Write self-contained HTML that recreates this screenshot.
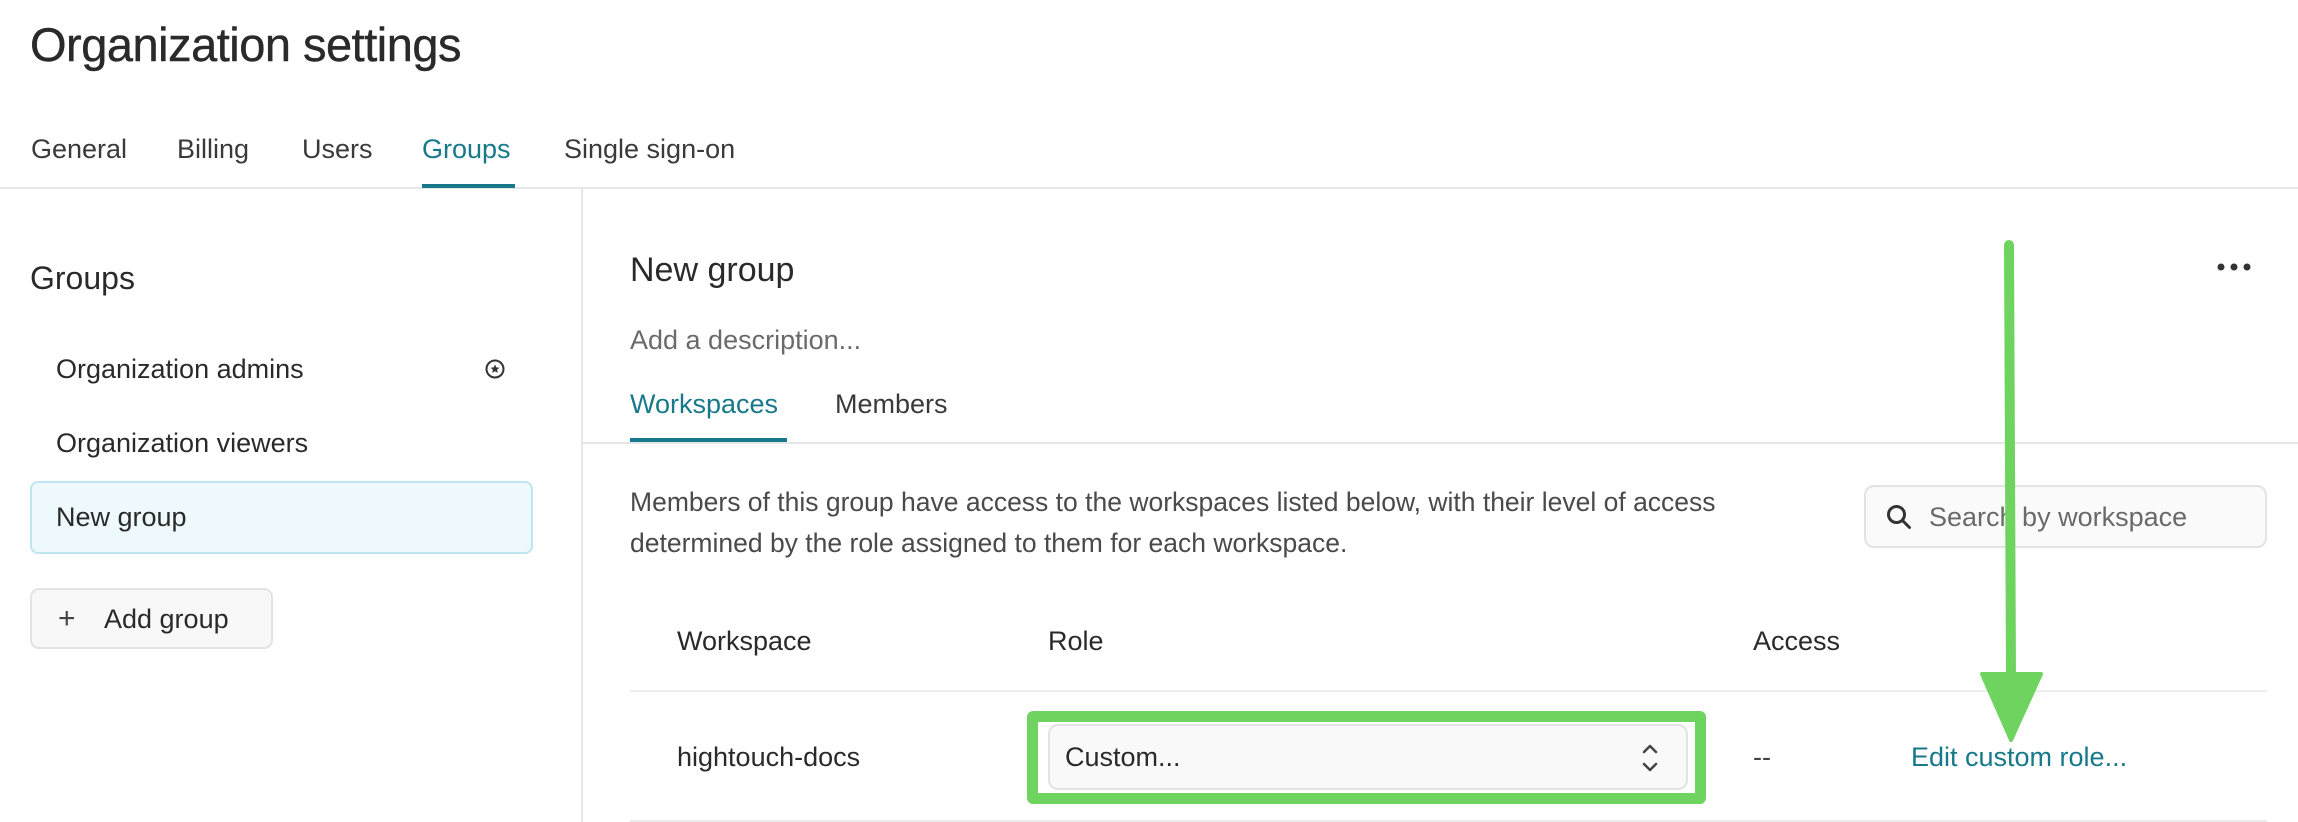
<!DOCTYPE html>
<html><head><meta charset="utf-8"><style>
*{margin:0;padding:0;box-sizing:border-box}
body{width:2298px;height:822px;overflow:hidden;background:#fff;font-family:"Liberation Sans",sans-serif;color:#2a2a2a;position:relative}
.a{position:absolute;white-space:nowrap}
</style></head><body>
<div class="a" style="left:30px;top:17px;font-size:47px;letter-spacing:-0.5px;-webkit-text-stroke:0.4px #2a2a2a">Organization settings</div>
<div class="a" style="left:31px;top:134px;font-size:27px;color:#3a3a3a">General</div>
<div class="a" style="left:177px;top:134px;font-size:27px;color:#3a3a3a">Billing</div>
<div class="a" style="left:302px;top:134px;font-size:27px;color:#3a3a3a">Users</div>
<div class="a" style="left:422px;top:134px;font-size:27px;color:#17798a">Groups</div>
<div class="a" style="left:564px;top:134px;font-size:27px;color:#3a3a3a">Single sign-on</div>
<div class="a" style="left:0;top:187px;width:2298px;height:2px;background:#e6e6e6"></div>
<div class="a" style="left:422px;top:184px;width:93px;height:4px;background:#17798a"></div>
<div class="a" style="left:581px;top:188px;width:2px;height:634px;background:#e6e6e6"></div>

<div class="a" style="left:30px;top:260px;font-size:32px">Groups</div>
<div class="a" style="left:56px;top:354px;font-size:27px">Organization admins</div>
<svg class="a" style="left:484px;top:358px" width="22" height="22" viewBox="0 0 22 22"><circle cx="11" cy="11" r="8.5" fill="none" stroke="#333" stroke-width="2"/><path d="M11 6.5l1.3 2.9 3.1.3-2.3 2.1.7 3.1-2.8-1.6-2.8 1.6.7-3.1-2.3-2.1 3.1-.3z" fill="#333"/></svg>
<div class="a" style="left:56px;top:428px;font-size:27px">Organization viewers</div>
<div class="a" style="left:30px;top:481px;width:503px;height:73px;background:#eef9fd;border:2px solid #bfe5f0;border-radius:8px"></div>
<div class="a" style="left:56px;top:502px;font-size:27px">New group</div>
<div class="a" style="left:30px;top:588px;width:243px;height:61px;background:#f8f8f8;border:2px solid #e3e3e3;border-radius:9px"></div>
<div class="a" style="left:58px;top:602px;font-size:30px;color:#444">+</div>
<div class="a" style="left:104px;top:604px;font-size:27px">Add group</div>

<div class="a" style="left:630px;top:251px;font-size:34px">New group</div>
<svg class="a" style="left:2216px;top:262px" width="36" height="10"><circle cx="5" cy="5" r="3.5" fill="#333"/><circle cx="18" cy="5" r="3.5" fill="#333"/><circle cx="31" cy="5" r="3.5" fill="#333"/></svg>
<div class="a" style="left:630px;top:325px;font-size:27px;color:#6a6a6a">Add a description...</div>
<div class="a" style="left:630px;top:389px;font-size:27px;color:#17798a">Workspaces</div>
<div class="a" style="left:835px;top:389px;font-size:27px;color:#3a3a3a">Members</div>
<div class="a" style="left:582px;top:442px;width:1716px;height:2px;background:#e6e6e6"></div>
<div class="a" style="left:630px;top:438px;width:157px;height:4px;background:#17798a"></div>

<div class="a" style="left:630px;top:482px;font-size:26.5px;line-height:41px;color:#4a4a4a">Members of this group have access to the workspaces listed below, with their level of access<br>determined by the role assigned to them for each workspace.</div>
<div class="a" style="left:1864px;top:485px;width:403px;height:63px;background:#fafafa;border:2px solid #e3e3e3;border-radius:10px"></div>
<svg class="a" style="left:1885px;top:503px" width="28" height="28" viewBox="0 0 28 28"><circle cx="11.5" cy="11.5" r="8" fill="none" stroke="#333" stroke-width="3"/><path d="M17.5 17.5l7 7" stroke="#333" stroke-width="3" stroke-linecap="round"/></svg>
<div class="a" style="left:1929px;top:502px;font-size:27px;color:#6a6a6a">Search by workspace</div>

<div class="a" style="left:677px;top:626px;font-size:27px">Workspace</div>
<div class="a" style="left:1048px;top:626px;font-size:27px">Role</div>
<div class="a" style="left:1753px;top:626px;font-size:27px">Access</div>
<div class="a" style="left:630px;top:690px;width:1637px;height:2px;background:#ececec"></div>
<div class="a" style="left:630px;top:820px;width:1637px;height:2px;background:#ececec"></div>
<div class="a" style="left:677px;top:742px;font-size:27px">hightouch-docs</div>
<div class="a" style="left:1027px;top:711px;width:679px;height:93px;border:11px solid #6fd360;border-radius:6px"></div>
<div class="a" style="left:1048px;top:724px;width:640px;height:66px;background:#f9f9f9;border:2px solid #e3e3e3;border-radius:10px"></div>
<div class="a" style="left:1065px;top:742px;font-size:27px">Custom...</div>
<svg class="a" style="left:1640px;top:741px" width="20" height="34" viewBox="0 0 20 34"><path d="M4 11l6-6 6 6M4 23l6 6 6-6" fill="none" stroke="#444" stroke-width="2.5" stroke-linecap="round" stroke-linejoin="round"/></svg>
<div class="a" style="left:1753px;top:742px;font-size:27px;color:#444">--</div>
<div class="a" style="left:1911px;top:742px;font-size:27px;color:#17798a">Edit custom role...</div>

<svg class="a" style="left:0;top:0" width="2298" height="822"><path d="M2009 245L2011 680" stroke="#6fd360" stroke-width="10" stroke-linecap="round"/><path d="M1982 674L2041 674L2011 740Z" fill="#6fd360" stroke="#6fd360" stroke-width="4" stroke-linejoin="round"/></svg>
</body></html>
